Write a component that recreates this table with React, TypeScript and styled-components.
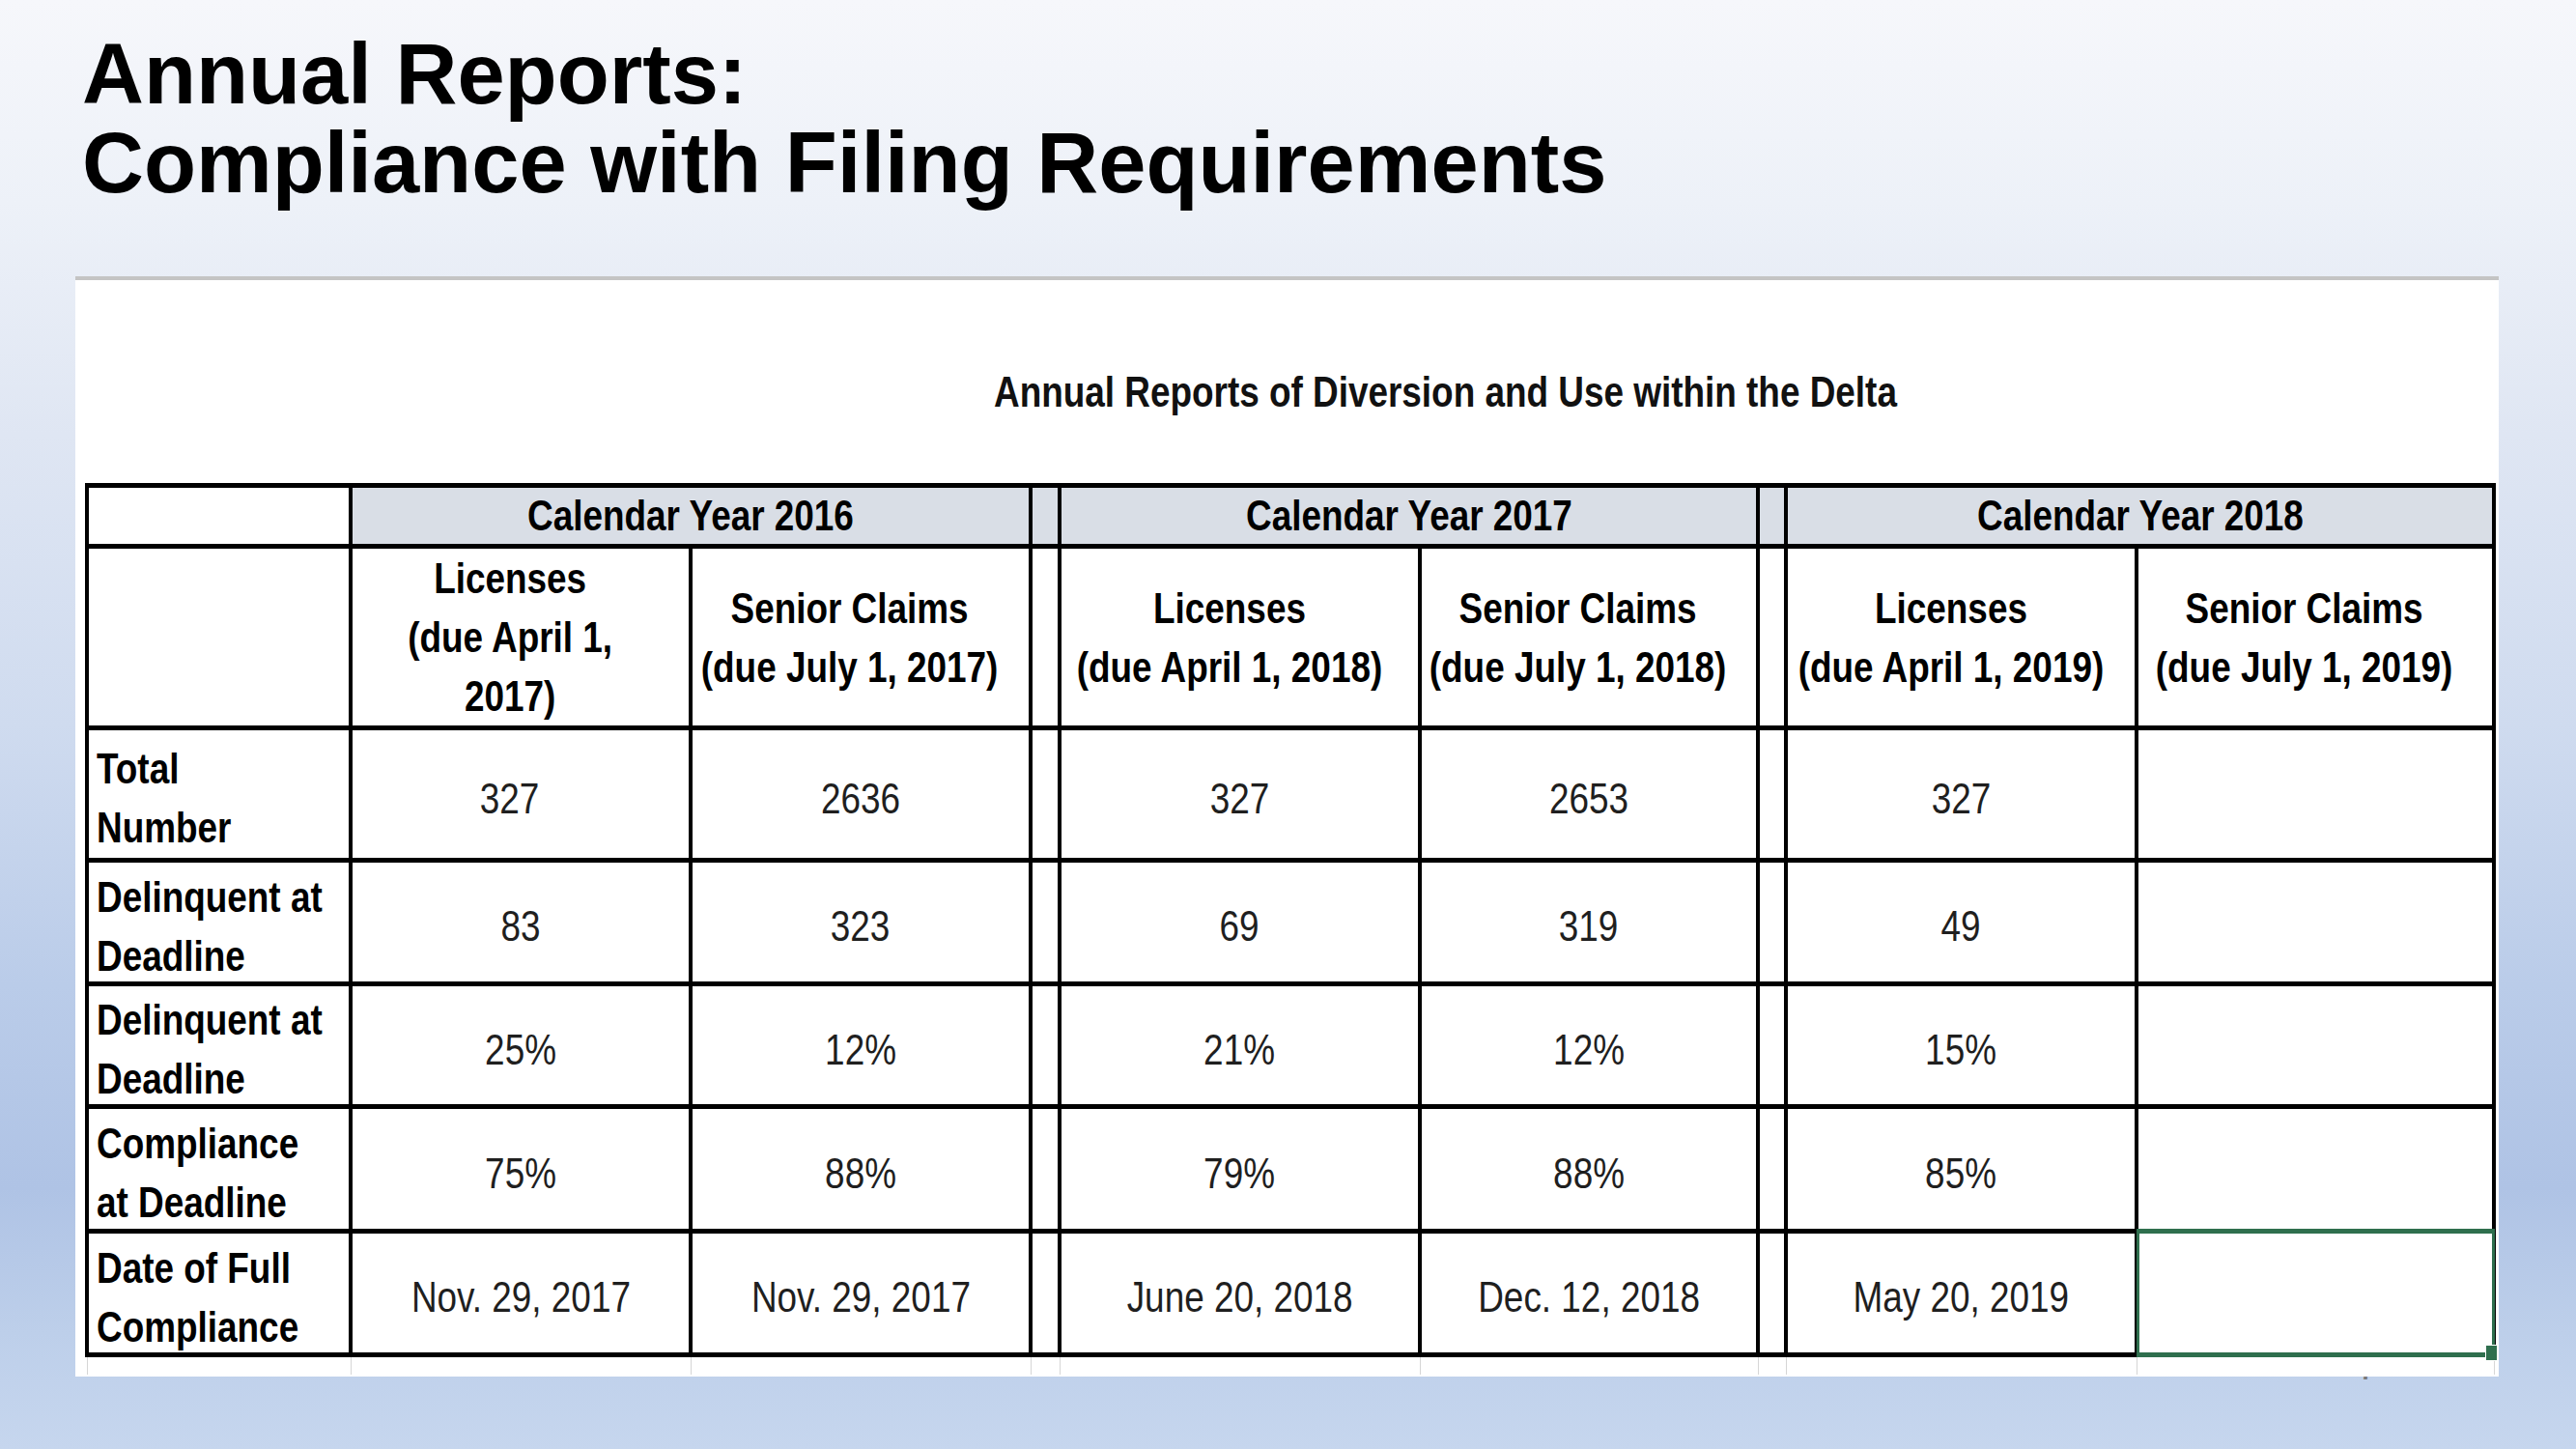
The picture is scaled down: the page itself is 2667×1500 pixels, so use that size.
import React from "react";
import styled, { createGlobalStyle } from "styled-components";

const GlobalStyle = createGlobalStyle`
  html, body {
    margin: 0;
    padding: 0;
  }
  body {
    width: 2667px;
    height: 1500px;
    overflow: hidden;
  }
`;

const SANS = `"Liberation Sans", Arial, sans-serif`;

const Slide = styled.div`
  position: relative;
  width: 2667px;
  height: 1500px;
  overflow: hidden;
  box-sizing: border-box;
  padding-top: 31px;
  background: linear-gradient(
    180deg,
    #f6f7fb 0%,
    #edf1f8 14%,
    #dfe6f3 30%,
    #cfdbef 50%,
    #bacce9 68%,
    #afc3e5 82%,
    #bdcfea 92%,
    #c6d6ee 100%
  );
`;

const Title = styled.h1`
  margin: 0 0 0 85px;
  font-family: ${SANS};
  font-weight: 700;
  font-size: 88.5px;
  line-height: 92px;
  color: #000;
`;

const Panel = styled.div`
  position: relative;
  z-index: 1;
  margin: 71px 0 0 78px;
  width: 2509px;
  height: 1139px;
  box-sizing: border-box;
  background: #fff;
  border-top: 4px solid #c4c4c4;
  padding: 90px 7px 0 10px;
`;

/* Arial Narrow is Arial squeezed to 82% width; no narrow face is installed */
const Narrow = styled.span<{ $origin?: string }>`
  display: inline-block;
  flex-shrink: 0;
  white-space: nowrap;
  transform: scaleX(0.82);
  transform-origin: ${(p) => p.$origin || "center"};
`;

const Caption = styled.div`
  display: flex;
  padding-left: 941px;
  height: 52px;
  margin-bottom: 68px;
  font-family: ${SANS};
  font-weight: 700;
  font-size: 45px;
  line-height: 52px;
  color: #111;
`;

const Sheet = styled.table`
  border-collapse: collapse;
  table-layout: fixed;
  width: 2492px;
  font-family: ${SANS};
  font-size: 45px;
  color: #000;
`;

const Row = styled.tr<{ $h: number; $lh: number }>`
  height: ${(p) => p.$h}px;
  line-height: ${(p) => p.$lh}px;
`;

const Cell = styled.td<{
  $bold?: boolean;
  $left?: boolean;
  $shade?: boolean;
  $nudge?: number;
  $selected?: boolean;
}>`
  position: relative;
  box-sizing: border-box;
  padding: 0 ${(p) => p.$nudge || 0}px 0 ${(p) => (p.$left ? "8px" : "0")};
  border-top: 5px solid #000;
  border-bottom: 5px solid #000;
  border-left: 4px solid #000;
  border-right: 4px solid #000;
  background: ${(p) => (p.$shade ? "#d9dee6" : "#fff")};
  font-weight: ${(p) => (p.$bold ? 700 : 400)};
  color: ${(p) => (p.$bold ? "#000" : "#1f1f1f")};
  text-align: ${(p) => (p.$left ? "left" : "center")};
  vertical-align: middle;
  overflow: visible;

  ${(p) =>
    p.$selected &&
    `
    &::before {
      content: "";
      position: absolute;
      top: -5px;
      left: -2px;
      right: -3px;
      bottom: -5px;
      border-style: solid;
      border-color: #2f6f4e;
      border-width: 5px 3px 5px 3px;
    }
    &::after {
      content: "";
      position: absolute;
      right: -6px;
      bottom: -9px;
      width: 11px;
      height: 15px;
      background: #2f6f4e;
      border: 1px solid #fff;
    }
  `}
`;

/* $drop moves the text down without making the row any taller */
const Content = styled.div<{ $left?: boolean; $drop?: number }>`
  display: flex;
  justify-content: ${(p) => (p.$left ? "flex-start" : "center")};
  padding-top: ${(p) => p.$drop || 0}px;
  margin-bottom: ${(p) => -(p.$drop || 0)}px;
`;

const TailCell = styled.td`
  height: 18px;
  padding: 0;
  border-left: 1px solid #d6d6d6;
  border-right: 1px solid #d6d6d6;
  border-bottom: none;
`;

const PageNumber = styled.div`
  position: absolute;
  left: 2440px;
  top: 1392px;
  font-family: ${SANS};
  font-size: 40px;
  color: #7a7a7a;
`;

const widths = [273, 352, 352, 30, 373, 350, 29, 363, 370];

const years = ["Calendar Year 2016", "Calendar Year 2017", "Calendar Year 2018"];

const subHeads: React.ReactNode[] = [
  <>Licenses<br />(due April 1,<br />2017)</>,
  <>Senior Claims<br />(due July 1, 2017)</>,
  <>Licenses<br />(due April 1, 2018)</>,
  <>Senior Claims<br />(due July 1, 2018)</>,
  <>Licenses<br />(due April 1, 2019)</>,
  <>Senior Claims<br />(due July 1, 2019)</>,
];

const rows = [
  { label: ["Total", "Number"], h: 137, values: ["327", "2636", "327", "2653", "327", ""] },
  { label: ["Delinquent at", "Deadline"], h: 128, values: ["83", "323", "69", "319", "49", ""] },
  { label: ["Delinquent at", "Deadline"], h: 127, values: ["25%", "12%", "21%", "12%", "15%", ""] },
  { label: ["Compliance", "at Deadline"], h: 129, values: ["75%", "88%", "79%", "88%", "85%", ""] },
  {
    label: ["Date of Full", "Compliance"],
    h: 128,
    values: ["Nov. 29, 2017", "Nov. 29, 2017", "June 20, 2018", "Dec. 12, 2018", "May 20, 2019", ""],
  },
];

function Text({
  children,
  left,
  drop,
}: {
  children?: React.ReactNode;
  left?: boolean;
  drop?: number;
}) {
  if (children === undefined || children === "") return null;
  return (
    <Content $left={left} $drop={drop}>
      <Narrow $origin={left ? "left" : "center"}>{children}</Narrow>
    </Content>
  );
}

function App() {
  return (
    <Slide>
      <GlobalStyle />
      <Title>
        Annual Reports:
        <br />
        Compliance with Filing Requirements
      </Title>
      <Panel>
        <Caption>
          <Narrow $origin="left">Annual Reports of Diversion and Use within the Delta</Narrow>
        </Caption>
        <Sheet>
          <colgroup>
            {widths.map((w, i) => (
              <col key={i} style={{ width: w }} />
            ))}
          </colgroup>
          <tbody>
            <Row $h={63} $lh={52}>
              <Cell />
              {years.map((y, i) => (
                <React.Fragment key={y}>
                  <Cell colSpan={2} $bold $shade>
                    <Text>{y}</Text>
                  </Cell>
                  {i < 2 && <Cell $shade />}
                </React.Fragment>
              ))}
            </Row>
            <Row $h={186} $lh={61}>
              <Cell />
              {subHeads.map((s, i) => (
                <React.Fragment key={i}>
                  <Cell $bold $nudge={22}>
                    <Text>{s}</Text>
                  </Cell>
                  {i % 2 === 1 && i < 5 && <Cell />}
                </React.Fragment>
              ))}
            </Row>
            {rows.map((r, ri) => (
              <Row key={ri} $h={r.h} $lh={61}>
                <Cell $bold $left>
                  <Text left drop={4}>
                    {r.label[0]}
                    <br />
                    {r.label[1]}
                  </Text>
                </Cell>
                {r.values.map((v, i) => (
                  <React.Fragment key={i}>
                    <Cell
                      $nudge={ri === 0 && i === 0 ? 22 : 0}
                      $selected={ri === rows.length - 1 && i === 5}
                    >
                      <Text drop={4}>{v}</Text>
                    </Cell>
                    {i % 2 === 1 && i < 5 && <Cell />}
                  </React.Fragment>
                ))}
              </Row>
            ))}
            <tr>
              {widths.map((_, i) => (
                <TailCell key={i} />
              ))}
            </tr>
          </tbody>
        </Sheet>
      </Panel>
      <PageNumber>7</PageNumber>
    </Slide>
  );
}

export default App;
